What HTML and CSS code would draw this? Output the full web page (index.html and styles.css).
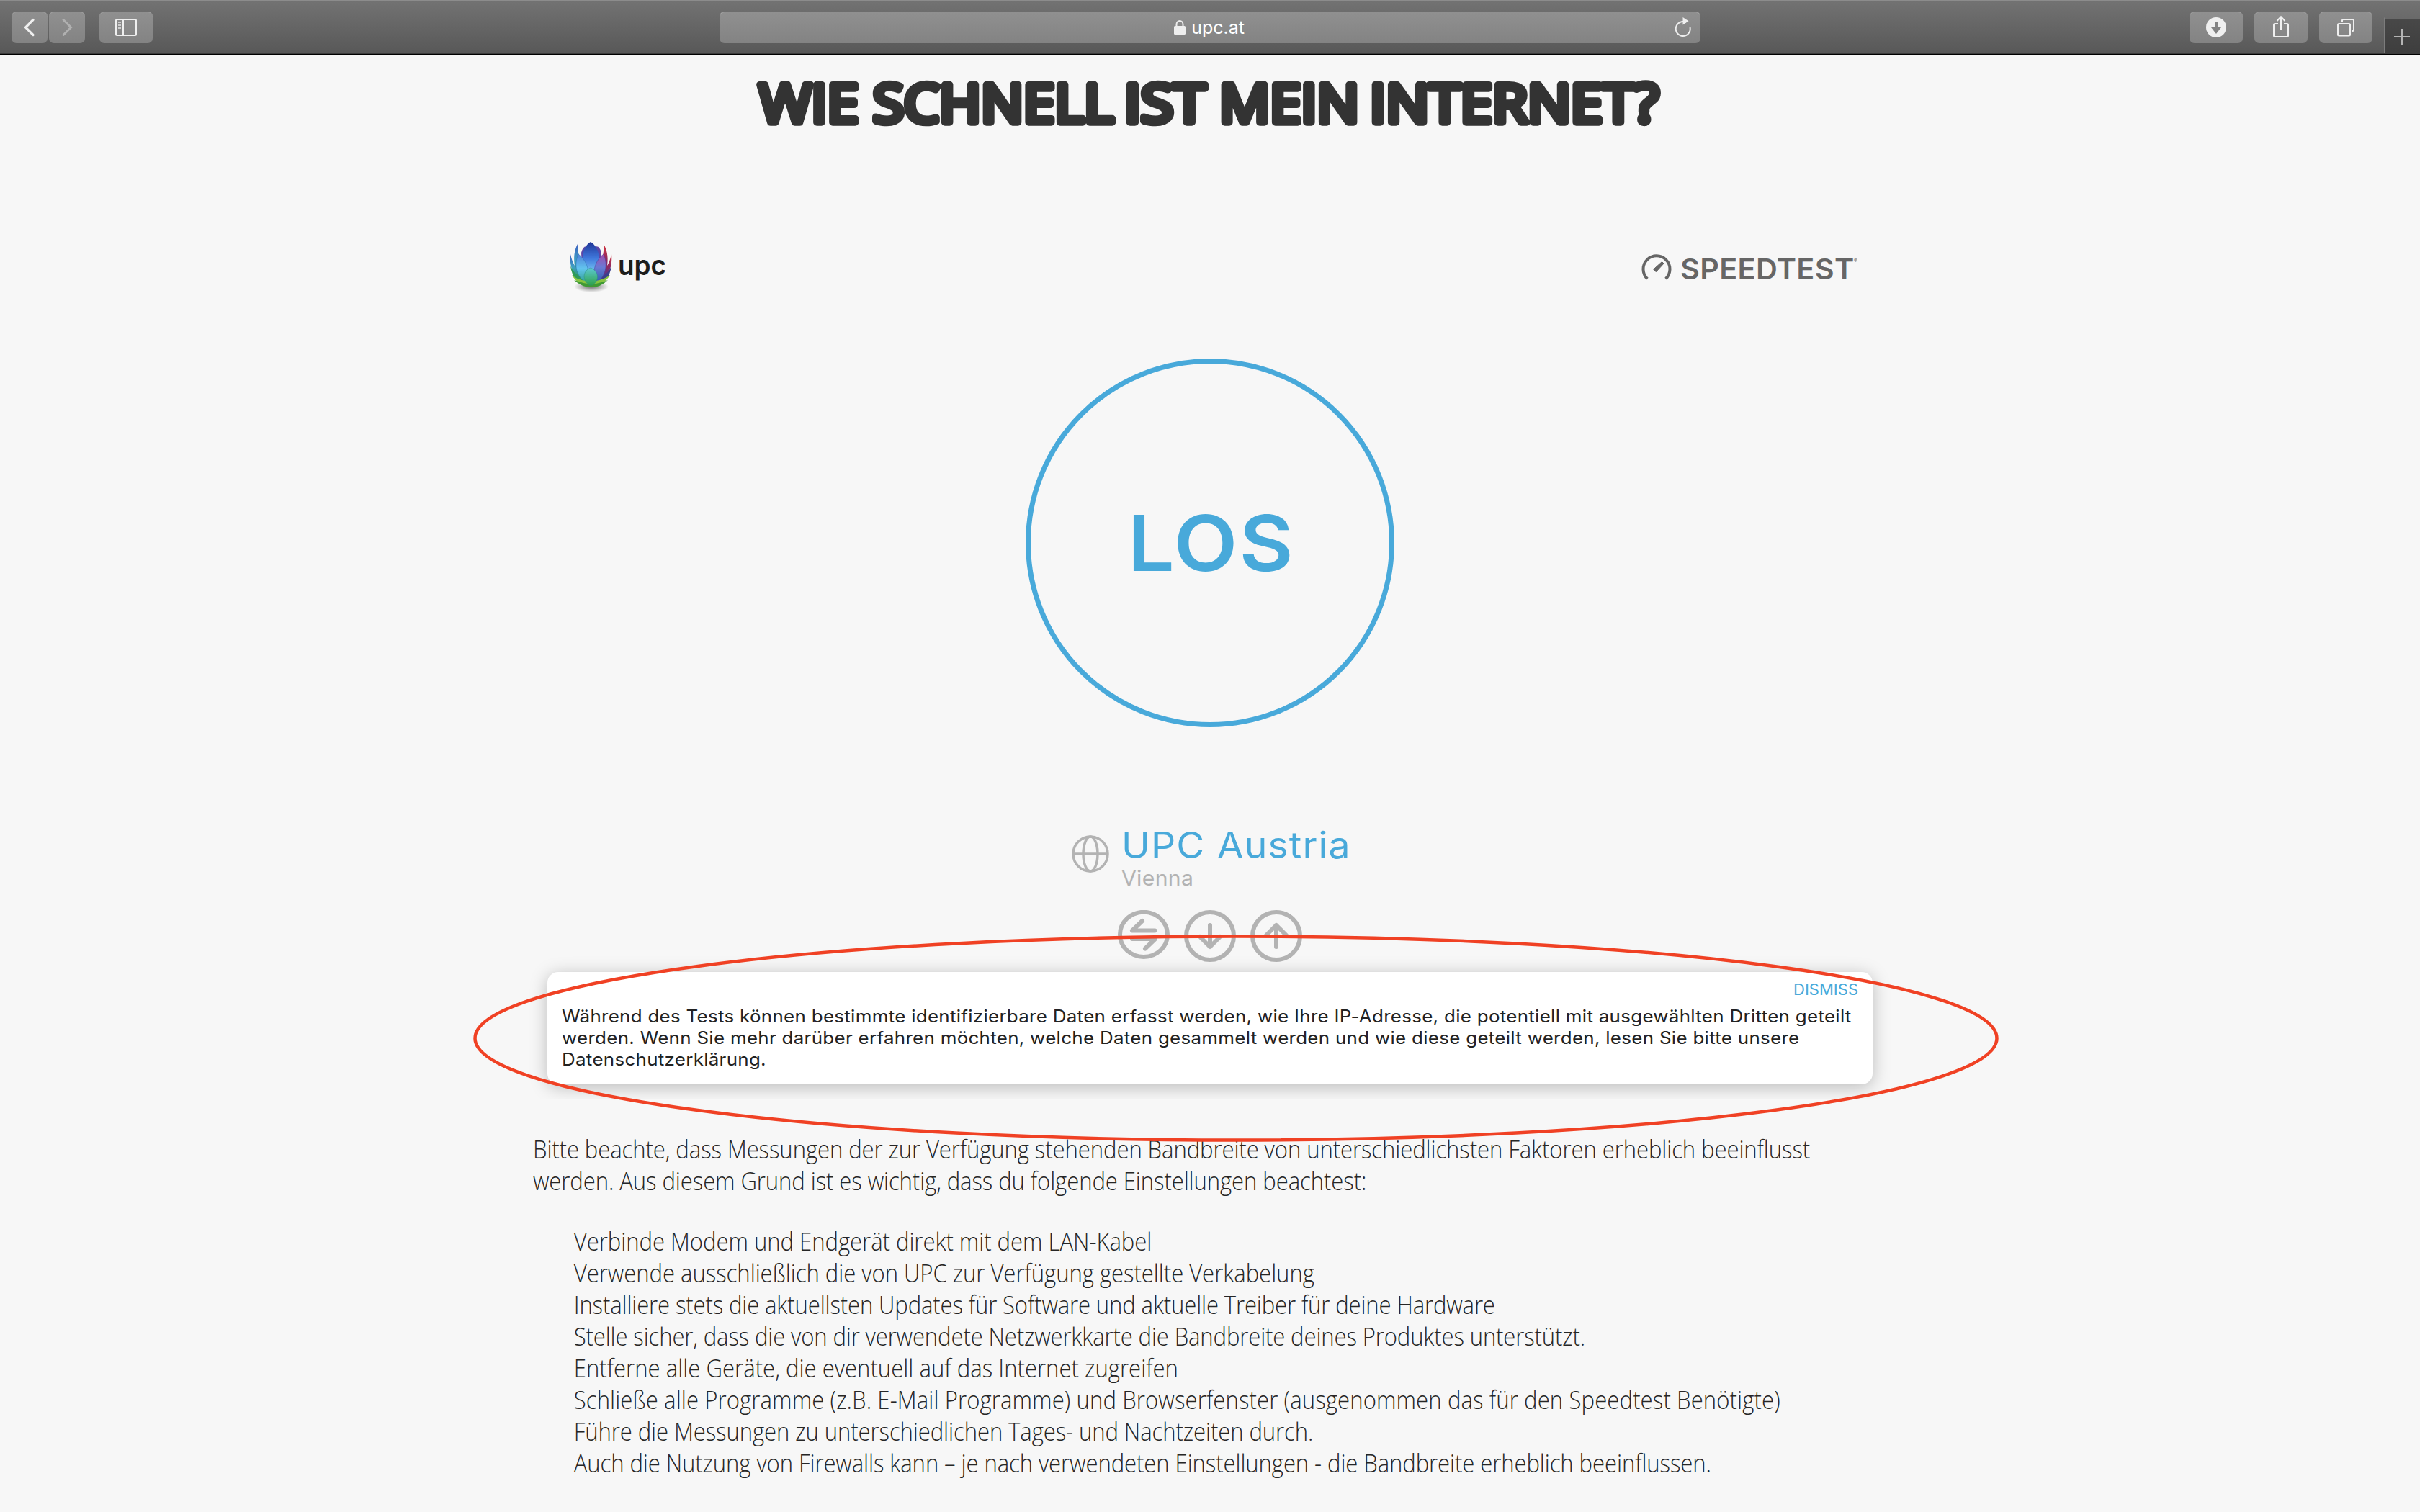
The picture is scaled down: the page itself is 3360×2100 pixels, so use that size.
FILE: index.html
```html
<!DOCTYPE html>
<html lang="de">
<head>
<meta charset="utf-8">
<title>upc.at</title>
<link rel="stylesheet" href="styles.css">
</head>
<body>
<header class="toolbar">
  <div class="nav-pair">
    <button class="tool nav"><svg width="50" height="44"><path d="M30 11.500L19.500 22L30 32.500" fill="none" stroke="#efefef" stroke-width="3.200" stroke-linecap="round"/></svg></button>
    <button class="tool nav"><svg width="50" height="44"><path d="M20 11.500L30.500 22L20 32.500" fill="none" stroke="#b0b0b0" stroke-width="3" stroke-linecap="round"/></svg></button>
  </div>
  <button class="tool"><svg width="74" height="44" fill="none" stroke="#efefef" stroke-width="2"><rect x="23" y="11" width="28" height="22" rx="1.500"/><path d="M33 11V33"/><path d="M26 15H30M26 19H30M26 23H30" stroke="#cfcfcf"/></svg></button>
  <div class="address">
    <span class="address-text"><svg width="16" height="20" viewBox="0 0 16 20"><path d="M3.500 9V6a4.500 5 0 0 1 9 0V9" fill="none" stroke="#eee" stroke-width="2"/><rect y="8" width="16" height="12" rx="1.500" fill="#eee"/></svg><span>upc.at</span></span>
    <svg class="reload" width="26" height="30" viewBox="0 0 26 30"><path d="M17 6.500A10 10 0 1 0 22.500 13.500" transform="translate(0 1.500)" fill="none" stroke="#eee" stroke-width="2"/><path d="M12.500 1L20.500 6.200L12.500 11.500Z" fill="#eee"/></svg>
  </div>
  <div class="actions">
    <button class="tool"><svg width="74" height="44"><circle cx="37" cy="22" r="14" fill="#efefef"/><path d="M35 14h4v8h5l-7 9l-7-9h5z" fill="#828282"/></svg></button>
    <button class="tool"><svg width="74" height="44" fill="none" stroke="#efefef" stroke-width="2"><path d="M33 17H28.500Q27 17 27 18.500V33.500Q27 35 28.500 35H45.500Q47 35 47 33.500V18.500Q47 17 45.500 17H41M37 26V8M31.500 13L37 7.300L42.500 13"/></svg></button>
    <button class="tool"><svg width="74" height="44" fill="none" stroke="#efefef" stroke-width="2"><rect x="26" y="17" width="17" height="16.500" rx="1.500"/><path d="M32 14V12.500Q32 11 33.500 11H46.500Q48 11 48 12.500V25.500Q48 27 46.500 27H45"/></svg></button>
  </div>
  <button class="new-tab"><svg width="48" height="48"><path d="M12 25H34M23 14V36" stroke="#b4b4b4" stroke-width="2"/></svg></button>
</header>

<main class="page">
  <h1 class="title"><svg width="1360" height="234" viewBox="1000 76 1360 234"><g class="title-text">
    <text x="1054" y="169.500" textLength="138" lengthAdjust="spacingAndGlyphs">WIE</text>
    <text x="1212" y="169.500" textLength="334" lengthAdjust="spacingAndGlyphs">SCHNELL</text>
    <text x="1561" y="169.500" textLength="113" lengthAdjust="spacingAndGlyphs">IST</text>
    <text x="1693" y="169.500" textLength="194" lengthAdjust="spacingAndGlyphs">MEIN</text>
    <text x="1902" y="169.500" textLength="401" lengthAdjust="spacingAndGlyphs">INTERNET?</text>
  </g></svg></h1>

  <section class="widget">
    <div class="brands">
      <div class="upc">
        <svg width="66" height="72" viewBox="0 0 66 72">
          <defs>
            <radialGradient id="shade"><stop offset="0" stop-color="#000" stop-opacity=".55"/><stop offset="1" stop-color="#000" stop-opacity="0"/></radialGradient>
            <linearGradient id="leftLeaf" x1="0" y1="0" x2="0" y2="1"><stop offset="0" stop-color="#3c5fc0"/><stop offset=".4" stop-color="#3f9fc4"/><stop offset=".75" stop-color="#2c9a5c"/><stop offset="1" stop-color="#9ccf3a"/></linearGradient>
            <linearGradient id="rightLeaf" x1="0" y1="0" x2="0" y2="1"><stop offset="0" stop-color="#d8343c"/><stop offset=".4" stop-color="#8c2a62"/><stop offset=".7" stop-color="#4b3b96"/><stop offset="1" stop-color="#4fae4c"/></linearGradient>
            <linearGradient id="core" x1="0" y1="0" x2="0" y2="1"><stop offset="0" stop-color="#1f3496"/><stop offset=".5" stop-color="#3f78dc"/><stop offset="1" stop-color="#7fd4f8"/></linearGradient>
            <linearGradient id="mid" x1="0" y1="0" x2="0" y2="1"><stop offset="0" stop-color="#4f7fd8"/><stop offset=".5" stop-color="#62c4ee"/><stop offset="1" stop-color="#2f9f8c"/></linearGradient>
            <linearGradient id="midRight" x1="0" y1="0" x2="0" y2="1"><stop offset="0" stop-color="#a04cac"/><stop offset=".45" stop-color="#6a7ad4"/><stop offset="1" stop-color="#2c5fae"/></linearGradient>
            <linearGradient id="front" x1="0" y1="0" x2="0" y2="1"><stop offset="0" stop-color="#5cc8d4"/><stop offset="1" stop-color="#2fa24a"/></linearGradient>
          </defs>
          <g transform="translate(0 1)">
          <ellipse cx="33" cy="63" rx="24" ry="8" fill="url(#shade)"/>
          <path d="M14 4C6 18 7 44 24 60L28 40C18 30 14 18 14 4Z" fill="url(#leftLeaf)"/>
          <path d="M4 18C2 38 10 54 28 62L26 46C13 42 7 32 4 18Z" fill="url(#leftLeaf)"/>
          <path d="M4 34C6 50 14 60 30 63L26 50C15 50 8 44 4 34Z" fill="#2e9a58"/>
          <path d="M50 4C59 18 58 44 42 60L38 40C48 30 51 18 50 4Z" fill="url(#rightLeaf)"/>
          <path d="M61 18C63 38 55 54 38 62L40 46C52 42 58 32 61 18Z" fill="url(#rightLeaf)"/>
          <path d="M61 34C59 50 51 60 36 63L40 50C51 50 57 44 61 34Z" fill="#3b3f8c"/>
          <path d="M19 16Q22 5 28 8L30 34L20 34ZM47 16Q44 5 38 8L36 34L46 34Z" fill="#5b46a8"/>
          <path d="M32 1C21 7 17 26 24 46H41C48 26 43 7 32 1Z" fill="url(#core)"/>
          <path d="M15 18C8 34 13 50 26 58C33 44 27 27 15 18Z" fill="url(#mid)" stroke="#2d6fb0" stroke-width=".5"/>
          <path d="M50 18C57 34 52 50 40 58C33 44 38 27 50 18Z" fill="url(#midRight)" stroke="#4b3b96" stroke-width=".5"/>
          <path d="M6 47C12 57 20 62 32 62.500C44 62 53 57 59 47C52 52 45 54 40 55L33 60L25 55C18 54 12 52 6 47Z" fill="#86c440"/>
          <path d="M9 54Q20 64 33 64Q46 64 56 54Q46 58 33 60Q20 58 9 54Z" fill="#3f9a34"/>
          <path d="M32 37C21 41 20 54 30 61H35C45 54 43 41 32 37Z" fill="url(#front)" stroke="#2b8f80" stroke-width=".5"/>
          </g>
        </svg>
        <span class="upc-name">upc</span>
      </div>
      <div class="speedtest">
        <svg width="44" height="44" viewBox="0 0 44 44"><path d="M9.300 36.200A18.500 18.500 0 1 1 34.700 36.200" fill="none" stroke="#666" stroke-width="4"/><path d="M19 25L17.800 23L29.500 12.500L32 15L21.500 26.500Z" fill="#666" stroke="#666"/></svg>
        <span class="speedtest-name">SPEEDTEST</span><span class="reg">®</span>
      </div>
    </div>

    <button class="go"><span>LOS</span></button>

    <div class="host">
      <svg class="globe" width="52" height="52" viewBox="0 0 52 52" fill="none" stroke="#b3b3b3" stroke-width="3.500"><circle cx="26" cy="26" r="24"/><ellipse cx="26" cy="26" rx="10" ry="24"/><path d="M2 26H50"/></svg>
      <div><div class="host-name">UPC Austria</div><div class="host-city">Vienna</div></div>
    </div>

    <div class="steps">
      <svg width="72" height="72" viewBox="0 0 72 72"><ellipse cx="36" cy="33.900" rx="33" ry="31.100"/><path d="M34 15L20 28.500H51.500M20 40H52L38 53.500"/></svg>
      <svg width="72" height="72" viewBox="0 0 72 72"><circle cx="36" cy="36" r="33"/><path d="M36 21V51M22 37L36 51L50 37"/></svg>
      <svg width="72" height="72" viewBox="0 0 72 72"><circle cx="36" cy="36" r="33"/><path d="M36 51V21M22 35L36 21L50 35"/></svg>
    </div>

    <div class="notice">
      <a class="dismiss">DISMISS</a>
      <p>Während des Tests können bestimmte identifizierbare Daten erfasst werden, wie Ihre IP-Adresse, die potentiell mit ausgewählten Dritten geteilt<br>werden. Wenn Sie mehr darüber erfahren möchten, welche Daten gesammelt werden und wie diese geteilt werden, lesen Sie bitte unsere<br>Datenschutzerklärung.</p>
    </div>
  </section>

  <section class="hints">
    <p>Bitte beachte, dass Messungen der zur Verfügung stehenden Bandbreite von unterschiedlichsten Faktoren erheblich beeinflusst<br>werden. Aus diesem Grund ist es wichtig, dass du folgende Einstellungen beachtest:</p>
    <ul>
      <li>Verbinde Modem und Endgerät direkt mit dem LAN-Kabel</li>
      <li>Verwende ausschließlich die von UPC zur Verfügung gestellte Verkabelung</li>
      <li>Installiere stets die aktuellsten Updates für Software und aktuelle Treiber für deine Hardware</li>
      <li>Stelle sicher, dass die von dir verwendete Netzwerkkarte die Bandbreite deines Produktes unterstützt.</li>
      <li>Entferne alle Geräte, die eventuell auf das Internet zugreifen</li>
      <li>Schließe alle Programme (z.B. E-Mail Programme) und Browserfenster (ausgenommen das für den Speedtest Benötigte)</li>
      <li>Führe die Messungen zu unterschiedlichen Tages- und Nachtzeiten durch.</li>
      <li>Auch die Nutzung von Firewalls kann – je nach verwendeten Einstellungen - die Bandbreite erheblich beeinflussen.</li>
    </ul>
  </section>
</main>
<svg class="marker" width="2124" height="292" viewBox="0 0 2124 292"><ellipse cx="1062" cy="146" rx="1056.500" ry="141.500" fill="none" stroke="#f04124" stroke-width="4.500"/></svg>
</body>
</html>
```
FILE: styles.css
```css
* { box-sizing: border-box; }
body {
  position: relative;
  margin: 0;
  width: 3360px;
  height: 2100px;
  overflow: hidden;
  background: #f7f7f7;
  font-family: "Open Sans", sans-serif;
  color: #333;
}
svg { display: block; flex: none; }
button { border: 0; padding: 0; background: none; font: inherit; }

/* Browser toolbar */
.toolbar {
  display: flex;
  height: 76px;
  padding: 16px 0 0 16px;
  background: linear-gradient(#8c8c8c 0 2px, #727272 2px, #585858 74px, #3c3c3c 74px 75px, #000 75px);
}
.nav-pair { display: flex; gap: 2px; margin-right: 20px; }
.tool {
  width: 74px;
  height: 44px;
  border-radius: 7px;
  background: linear-gradient(#909090, #838383);
  box-shadow: inset 0 1px #a0a0a0;
}
.tool.nav { width: 50px; }
.address {
  display: flex;
  align-items: center;
  justify-content: flex-end;
  width: 1362px;
  height: 44px;
  margin-left: 787px;
  padding-right: 11px;
  border-radius: 7px;
  background: linear-gradient(#909090, #838383);
  box-shadow: inset 0 1px #a8a8a8;
}
.address-text {
  display: flex;
  align-items: center;
  gap: 8px;
  margin-right: 596px;
  font: 400 25px/44px Inter, sans-serif;
  color: #fff;
}
.actions { display: flex; gap: 16px; margin-left: auto; margin-right: 16px; }
.new-tab {
  width: 50px;
  height: 50px;
  margin-top: 8px;
  border-top: 2px solid #6a6a6a;
  border-left: 2px solid #7c7c7c;
  background: linear-gradient(#484848, #3e3e3e);
}

/* Heading */
.title { display: flex; justify-content: center; height: 234px; margin: 0; }
.title-text {
  font: 400 74px "Open Sans", sans-serif;
  fill: #333;
  stroke: #333;
  stroke-width: 9.5px;
  stroke-linejoin: round;
}

/* Speed test widget */
.widget { width: 1840px; margin: 0 auto; }
.brands {
  display: flex;
  justify-content: space-between;
  align-items: center;
  height: 120px;
  padding: 0 19px 0 28px;
}
.upc, .speedtest { display: flex; align-items: center; }
.upc-name {
  margin: -4px 0 0 4px;
  font: 600 38px Inter, sans-serif;
  color: #1d1d1b;
  transform: scaleX(.97);
  transform-origin: left;
}
.speedtest { margin-top: 6px; color: #666; }
.speedtest svg { margin-right: 11px; }
.speedtest-name {
  width: 241px;
  font: 600 39px Inter, sans-serif;
  letter-spacing: .3px;
  transform: scaleX(1.06);
  transform-origin: left;
}
.reg { width: 7px; margin-bottom: 22px; font: 7px Inter, sans-serif; }
.go {
  display: flex;
  align-items: center;
  justify-content: center;
  width: 512px;
  height: 512px;
  margin: 68px auto 0;
  padding-left: 3px;
  border: 7.5px solid #48a9da;
  border-radius: 50%;
  font: 600 107px Inter, sans-serif;
  letter-spacing: 2px;
  color: #48a9da;
}
.go span { transform: scaleX(1.08); }
.host { display: flex; width: 384px; height: 254px; margin: 0 auto; padding-top: 134px; font-family: Inter, sans-serif; }
.globe { margin: 16px 17px 0 0; }
.host-name {
  font-size: 50.5px;
  line-height: 60px;
  letter-spacing: 1.05px;
  color: #48a9da;
  white-space: nowrap;
  transform: scaleX(1.06);
  transform-origin: left;
}
.host-city {
  margin-top: -2px;
  font-size: 29px;
  line-height: 36px;
  letter-spacing: .3px;
  color: #b3b3b3;
  transform: scaleX(1.04);
  transform-origin: left;
}
.steps { display: flex; justify-content: center; gap: 20px; margin-bottom: 14px; }
.steps svg { fill: none; stroke: #b3b3b3; stroke-width: 6; stroke-linecap: round; stroke-linejoin: round; }
.notice {
  height: 156px;
  padding: 9px 20px 0;
  border-radius: 15px;
  background: #fff;
  box-shadow: 0 4px 24px rgba(0, 0, 0, .25);
  clip-path: inset(-40px -40px -20px -40px);
  font: 24px/30px Inter, sans-serif;
  color: #222;
  white-space: nowrap;
}
.dismiss { display: block; font-size: 22px; text-align: right; color: #48a9da; }
.notice p {
  margin: 8px 0 0;
  letter-spacing: .278px;
  transform: scaleX(1.08);
  transform-origin: left;
}

/* Hints */
.hints {
  width: 1880px;
  margin: 68px auto 0;
  font-size: 34px;
  font-weight: 300;
  letter-spacing: -.12px;
  line-height: 44px;
  white-space: nowrap;
  color: #262626;
  transform: scaleX(.915);
  transform-origin: left;
}
.hints p { margin: 0 0 40px; }
.hints ul { margin: 0; padding-left: 62px; list-style: none; }
.hints li:nth-child(1), .hints li:nth-child(2) { letter-spacing: -.06px; }
.hints li:nth-child(3), .hints li:nth-child(4) { letter-spacing: -.17px; }
.hints li:nth-child(5) { letter-spacing: 0; }
.hints li:nth-child(6) { letter-spacing: .098px; }

/* Hand-drawn highlight over the notice */
.marker { position: absolute; left: 653.5px; top: 1296px; pointer-events: none; }
```
